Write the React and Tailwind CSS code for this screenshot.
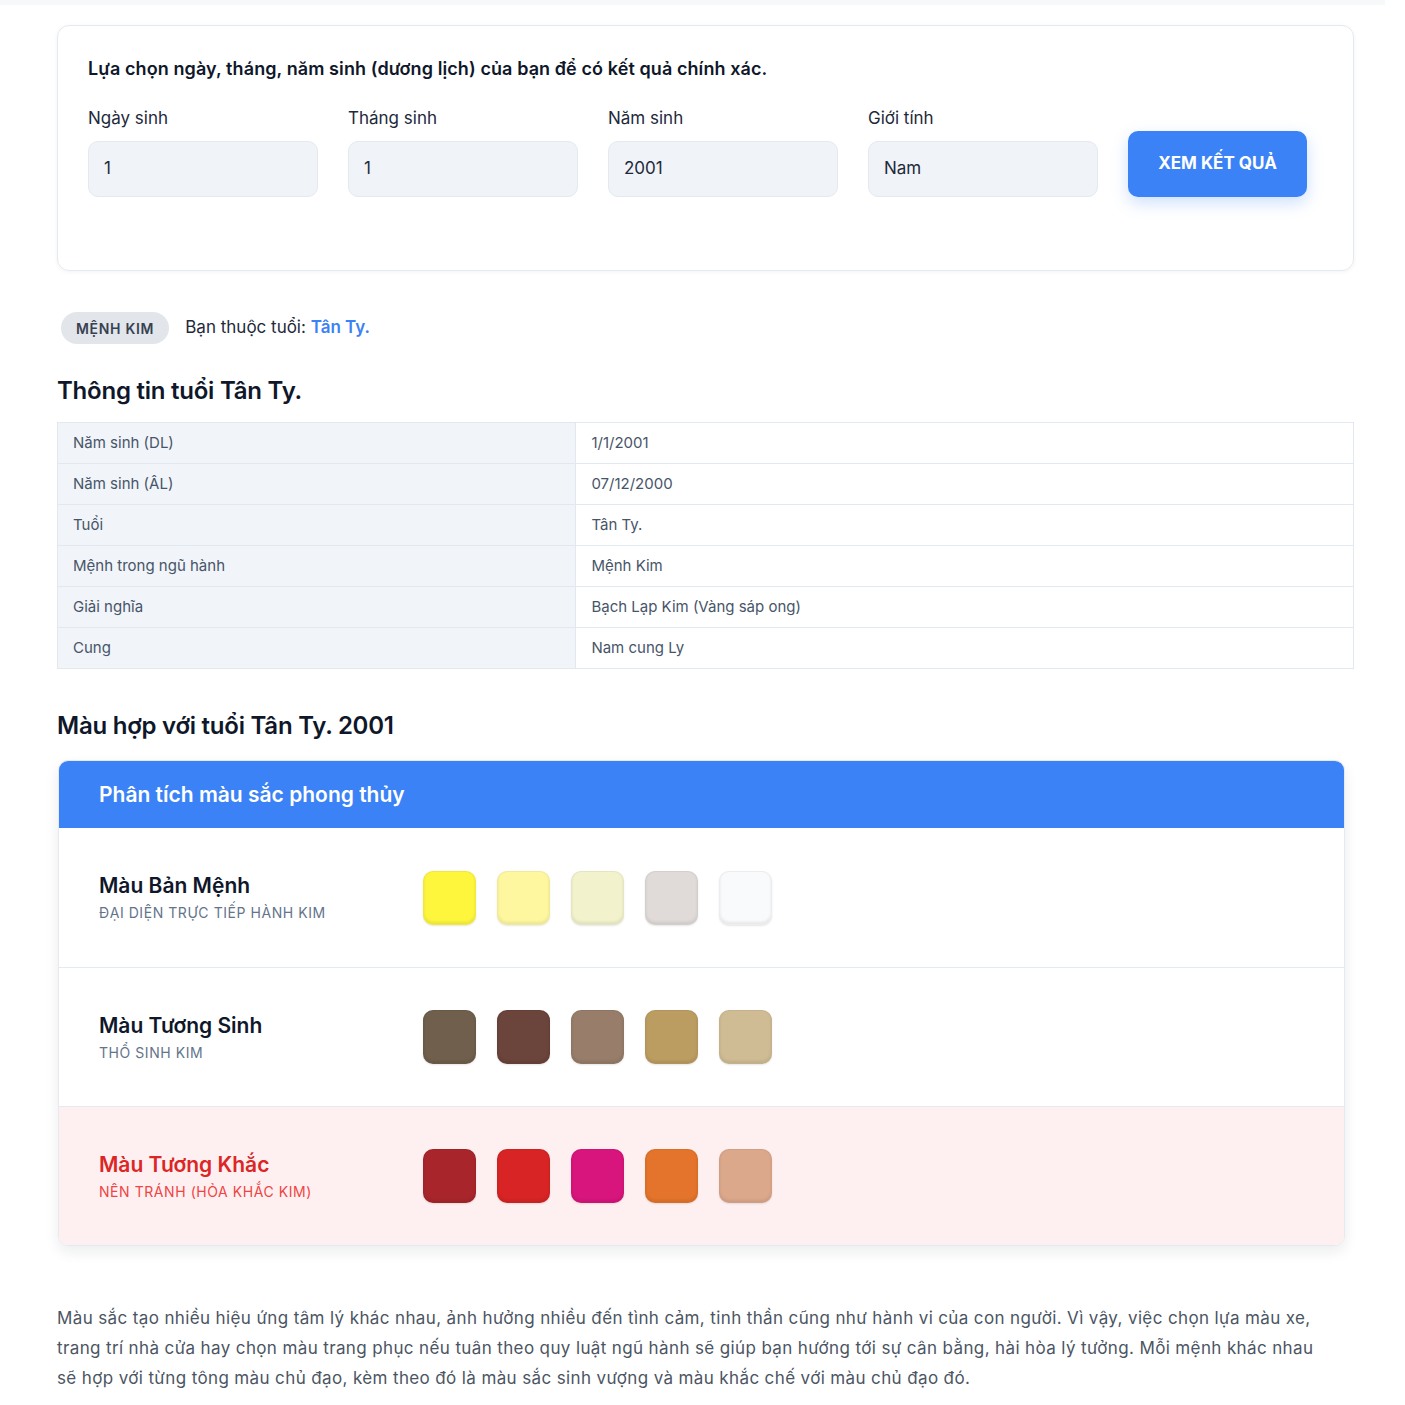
import { useState } from "react"

const infoRows = [
	["Năm sinh (DL)", "1/1/2001"],
	["Năm sinh (ÂL)", "07/12/2000"],
	["Tuổi", "Tân Ty."],
	["Mệnh trong ngũ hành", "Mệnh Kim"],
	["Giải nghĩa", "Bạch Lạp Kim (Vàng sáp ong)"],
	["Cung", "Nam cung Ly"],
]

const colorGroups = [
	{
		title: "Màu Bản Mệnh",
		sub: "Đại diện trực tiếp hành Kim",
		colors: ["#fef53d", "#fef7a0", "#f2f3cc", "#e0dbd8", "#f9fafc"],
		warn: false,
	},
	{
		title: "Màu Tương Sinh",
		sub: "Thổ sinh Kim",
		colors: ["#6f5f4c", "#6b443b", "#977d6a", "#bc9d61", "#cfbc94"],
		warn: false,
	},
	{
		title: "Màu Tương Khắc",
		sub: "Nên tránh (Hỏa khắc Kim)",
		colors: ["#a8262b", "#d82424", "#d8157c", "#e4742b", "#dca88c"],
		warn: true,
	},
]

function Field({ label, value }) {
	return (
		<div className="flex flex-col">
			<label className="text-[17px] text-[#1e293b] leading-[24px] mb-[11px]">{label}</label>
			<div className="h-[56px] rounded-[10px] bg-[#f0f3f7] border border-[#e5e9ef] flex items-center px-[15px] text-[17px] text-[#1e293b]">
				{value}
			</div>
		</div>
	)
}

function App() {
	const [form] = useState({ day: "1", month: "1", year: "2001", gender: "Nam" })

	return (
		<div className="min-h-screen bg-white font-['Inter',sans-serif]">
			<div className="h-[5px] w-[1385px] bg-[#f7f8fa]" />
			<div className="px-[57px] pr-[51px] pt-[20px] pb-[20px]">
				{/* form card */}
				<div className="rounded-[12px] border border-[#e5e9f0] shadow-[0_1px_4px_rgba(15,23,42,0.05)] pl-[30px] pr-[30px] pt-[30px] pb-[73px]">
					<p className="text-[18px] font-semibold text-[#0f172a] leading-[26px] tracking-[0.005em]">
						Lựa chọn ngày, tháng, năm sinh (dương lịch) của bạn để có kết quả chính xác.
					</p>
					<div className="mt-[24px] grid grid-cols-[230px_230px_230px_230px_auto] gap-[30px] items-end">
						<Field label="Ngày sinh" value={form.day} />
						<Field label="Tháng sinh" value={form.month} />
						<Field label="Năm sinh" value={form.year} />
						<Field label="Giới tính" value={form.gender} />
						<div>
							<button className="w-[179px] h-[66px] rounded-[10px] bg-[#3b82f6] text-white font-bold text-[17px] uppercase shadow-[0_6px_16px_rgba(59,130,246,0.25)]">
								Xem kết quả
							</button>
						</div>
					</div>
				</div>

				{/* badge line */}
				<div className="mt-[41px] flex items-center ml-[4px]">
					<span className="h-[32px] px-[15px] rounded-full bg-[#e2e5ea] text-[#374151] text-[14px] font-semibold uppercase tracking-[0.05em] flex items-center">
						Mệnh Kim
					</span>
					<span className="ml-[16px] text-[17px] text-[#1e293b]">
						Bạn thuộc tuổi: <span className="text-[#3b82f6] font-semibold">Tân Ty.</span>
					</span>
				</div>

				<h2 className="mt-[30px] text-[24px] font-semibold text-[#0f172a] leading-[34px] tracking-[-0.01em]">Thông tin tuổi Tân Ty.</h2>

				<table className="mt-[14px] w-full border-collapse text-[15px] text-[#475569]">
					<tbody>
						{infoRows.map(([k, v]) => (
							<tr key={k} className="h-[41px]">
								<td className="w-[40%] bg-[#f1f4f8] border border-[#e2e8f0] px-[15px]">{k}</td>
								<td className="border border-[#e2e8f0] px-[15px]">{v}</td>
							</tr>
						))}
					</tbody>
				</table>

				<h2 className="mt-[40px] text-[24px] font-semibold text-[#0f172a] leading-[34px] tracking-[-0.01em]">Màu hợp với tuổi Tân Ty. 2001</h2>

				{/* colour card */}
				<div className="mt-[17px] mr-[9px] ml-[1px] rounded-[10px] overflow-hidden border border-[#e5e9f0] shadow-[0_6px_14px_rgba(15,23,42,0.08)]">
					<div className="h-[67px] bg-[#3b82f6] flex items-center px-[40px]">
						<span className="text-white text-[21px] font-semibold">Phân tích màu sắc phong thủy</span>
					</div>
					{colorGroups.map((g, i) => (
						<div
							key={g.title}
							className={`h-[139px] flex items-center px-[40px] ${i > 0 ? "border-t border-[#e5e9f0]" : ""} ${g.warn ? "bg-[#fef0f1]" : "bg-white"}`}>
							<div className="w-[324px]">
								<div className={`text-[21px] font-semibold leading-[28px] ${g.warn ? "text-[#dc2626]" : "text-[#0f172a]"}`}>{g.title}</div>
								<div className={`mt-[2px] text-[14px] uppercase tracking-[0.04em] ${g.warn ? "text-[#ef4444]" : "text-[#64748b]"}`}>{g.sub}</div>
							</div>
							<div className="flex gap-[21px]">
								{g.colors.map((c) => (
									<div
										key={c}
										className="w-[53px] h-[54px] rounded-[10px] shadow-[inset_0_-2px_3px_rgba(0,0,0,0.08),0_1px_2px_rgba(0,0,0,0.1)] border border-black/5"
										style={{ backgroundColor: c }}
									/>
								))}
							</div>
						</div>
					))}
				</div>

				<p className="mt-[57px] max-w-[1273px] text-[17px] leading-[30px] text-[#4b5563] tracking-[0.022em]">
					Màu sắc tạo nhiều hiệu ứng tâm lý khác nhau, ảnh hưởng nhiều đến tình cảm, tinh thần cũng như hành vi của con người. Vì vậy, việc chọn lựa màu xe, trang trí nhà cửa hay chọn màu trang phục nếu tuân theo quy luật ngũ hành sẽ giúp bạn hướng tới sự cân bằng, hài hòa lý tưởng. Mỗi mệnh khác nhau sẽ hợp với từng tông màu chủ đạo, kèm theo đó là màu sắc sinh vượng và màu khắc chế với màu chủ đạo đó.
				</p>
			</div>
		</div>
	)
}

export default App
